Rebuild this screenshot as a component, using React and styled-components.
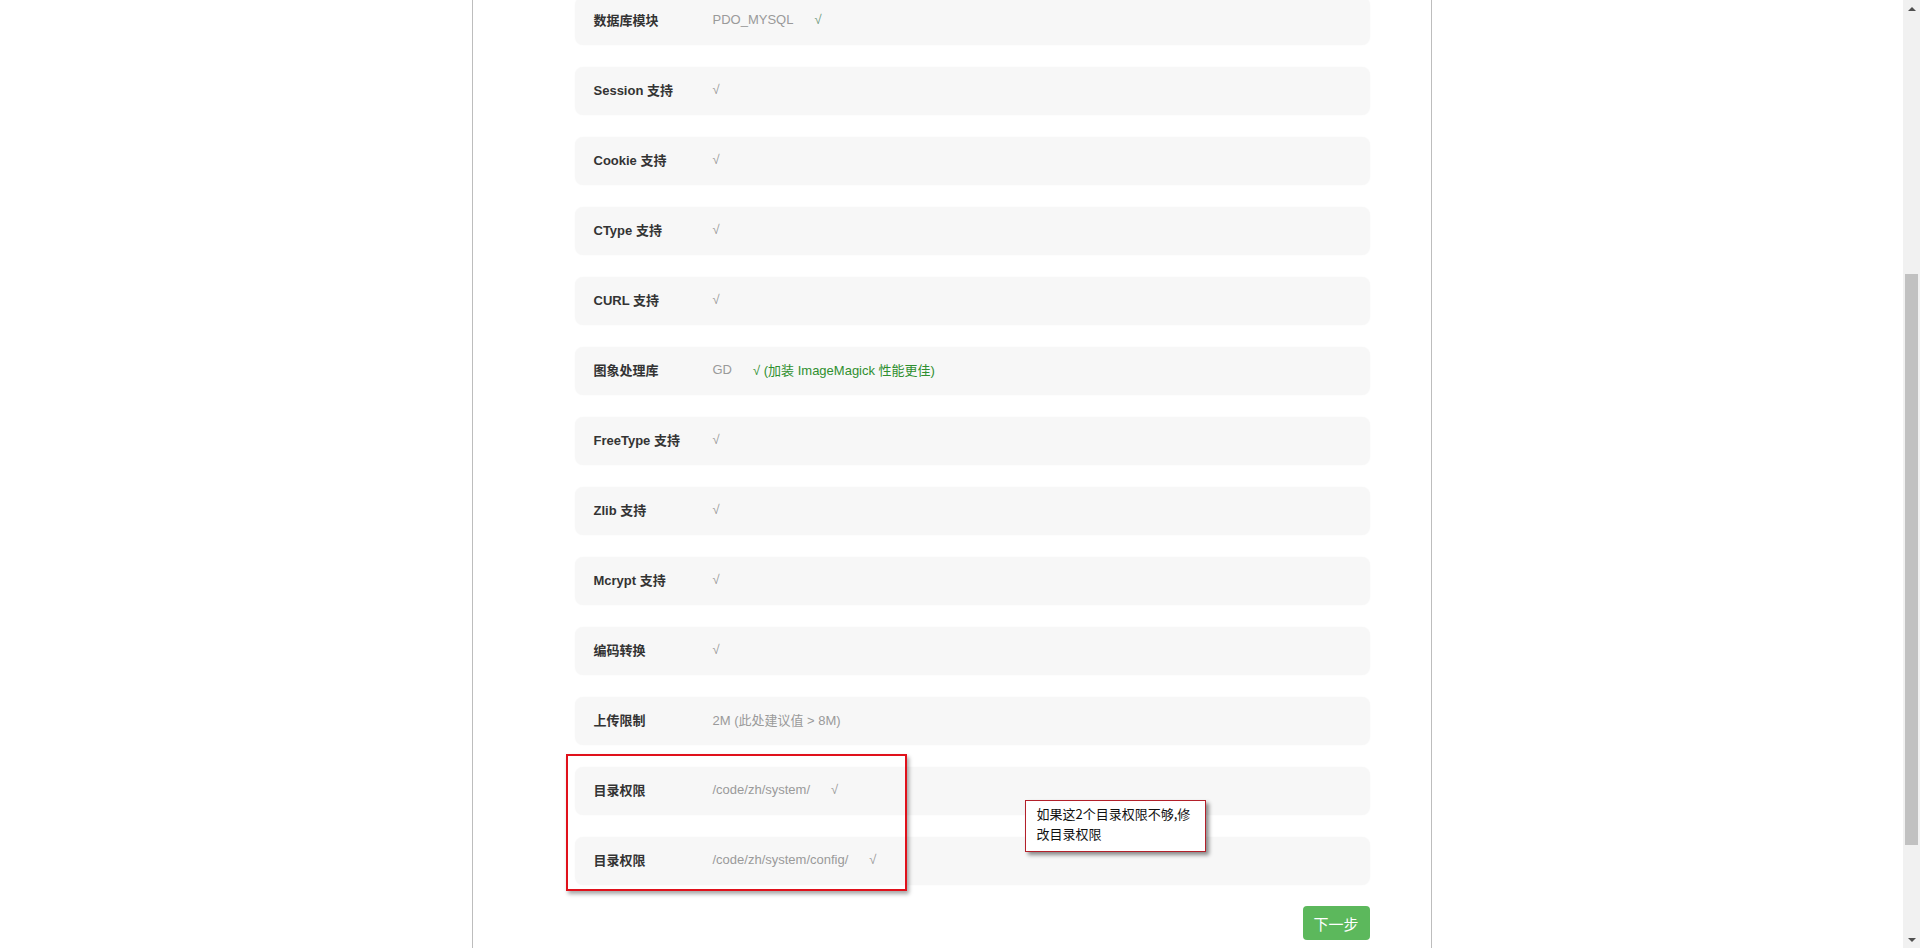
import React, { Fragment } from 'react';
import styled, { createGlobalStyle } from 'styled-components';

// ─────────────────────────────────────────────────────────────────────────────
// global
// ─────────────────────────────────────────────────────────────────────────────

const GlobalStyle = createGlobalStyle`
  html, body {
    margin: 0;
    padding: 0;
    background: #fff;
    overflow: hidden;
  }
  body {
    font-family: "Liberation Sans", Arial, "Noto Sans CJK SC", sans-serif;
    font-size: 13px;
    color: #333;
  }
`;

// ─────────────────────────────────────────────────────────────────────────────
// page + scrollbar
// ─────────────────────────────────────────────────────────────────────────────

const Page = styled.div`
  display: flex;
  height: 100vh;
`;

const Main = styled.main`
  flex: 1;
  overflow: hidden;
`;

const Scrollbar = styled.div`
  width: 17px;
  flex: none;
  display: flex;
  flex-direction: column;
  background: #f1f1f1;
`;

const Arrow = styled.div`
  height: 17px;
  display: flex;
  align-items: center;
  justify-content: center;
  &::before {
    content: '';
    border-left: 4px solid transparent;
    border-right: 4px solid transparent;
    ${(p) =>
      p.down ? 'border-top: 4px solid #505050;' : 'border-bottom: 4px solid #505050;'}
  }
`;

const Track = styled.div`
  flex: 1;
  padding: 257px 2px 0;
`;

const Thumb = styled.div`
  height: 571px;
  background: #c1c1c1;
`;

// ─────────────────────────────────────────────────────────────────────────────
// panel
// ─────────────────────────────────────────────────────────────────────────────

const Panel = styled.div`
  box-sizing: border-box;
  width: 960px;
  min-height: 100vh;
  margin: 0 auto;
  border-left: 1px solid #bdbdbd;
  border-right: 1px solid #bdbdbd;
  padding: 0 61px 0 102px;
`;

const List = styled.div`
  display: flex;
  flex-direction: column;
  gap: 22px;
  margin-top: -3px;
`;

const Group = styled.div`
  position: relative;
  display: flex;
  flex-direction: column;
  gap: 22px;
`;

const Row = styled.div`
  box-sizing: border-box;
  display: flex;
  align-items: center;
  height: 48px;
  padding: 0 0 3px 19px;
  background: #f7f7f7;
  border-radius: 8px;
  box-shadow: 0 0 2px rgba(0, 0, 0, 0.03);
`;

const Label = styled.span`
  width: 119px;
  flex: none;
  font-weight: bold;
  color: #333;
`;

const Value = styled.span`
  color: #9a9a9a;
`;

const Check = styled.span`
  margin-left: ${(p) => p.gap ?? 0}px;
  color: ${(p) => (p.green ? '#2f8f2f' : p.tint ? '#6f9a80' : '#9a9a9a')};
`;

// ─────────────────────────────────────────────────────────────────────────────
// annotations
// ─────────────────────────────────────────────────────────────────────────────

const Highlight = styled.div`
  position: absolute;
  left: -9px;
  top: -13px;
  width: 341px;
  height: 137px;
  box-sizing: border-box;
  border: 2px solid #e0111b;
  box-shadow: 2px 3px 4px rgba(0, 0, 0, 0.35);
  pointer-events: none;
`;

const Note = styled.div`
  position: absolute;
  left: 450px;
  top: 33px;
  width: 181px;
  height: 52px;
  box-sizing: border-box;
  padding: 3px 10px 0 11px;
  background: #fff;
  border: 1px solid #b3202a;
  box-shadow: 3px 3px 4px rgba(0, 0, 0, 0.45);
  font-family: "Noto Sans CJK SC", sans-serif;
  font-size: 13px;
  line-height: 20px;
  color: #111;
`;

// ─────────────────────────────────────────────────────────────────────────────
// footer
// ─────────────────────────────────────────────────────────────────────────────

const Actions = styled.div`
  display: flex;
  justify-content: flex-end;
  padding: 21px 0 40px;
`;

const Button = styled.button`
  width: 67px;
  height: 34px;
  border: 0;
  border-radius: 4px;
  background: #5cb85c;
  color: #fff;
  font-family: "Noto Sans CJK SC", sans-serif;
  font-size: 15px;
  cursor: pointer;
`;

// ─────────────────────────────────────────────────────────────────────────────
// data
// ─────────────────────────────────────────────────────────────────────────────

const rows = [
  { label: '数据库模块', value: 'PDO_MYSQL', check: { gap: 21, tint: true } },
  { label: 'Session 支持', check: {} },
  { label: 'Cookie 支持', check: {} },
  { label: 'CType 支持', check: {} },
  { label: 'CURL 支持', check: {} },
  { label: '图象处理库', value: 'GD', check: { gap: 21, green: true, text: '√ (加装 ImageMagick 性能更佳)' } },
  { label: 'FreeType 支持', check: {} },
  { label: 'Zlib 支持', check: {} },
  { label: 'Mcrypt 支持', check: {} },
  { label: '编码转换', check: {} },
  { label: '上传限制', value: '2M (此处建议值 > 8M)' },
];

const dirs = [
  { label: '目录权限', value: '/code/zh/system/' },
  { label: '目录权限', value: '/code/zh/system/config/' },
];

function CheckRow({ label, value, check }) {
  return (
    <Row>
      <Label>{label}</Label>
      {value && <Value>{value}</Value>}
      {check && (
        <Check gap={check.gap} green={check.green} tint={check.tint}>
          {check.text || '√'}
        </Check>
      )}
    </Row>
  );
}

export default function App() {
  return (
    <Fragment>
      <GlobalStyle />
      <Page>
        <Main>
          <Panel>
            <List>
              {rows.map((r, i) => (
                <CheckRow key={i} {...r} />
              ))}
              <Group>
                {dirs.map((d, i) => (
                  <CheckRow key={i} {...d} check={{ gap: 21 }} />
                ))}
                <Highlight />
                <Note>如果这2个目录权限不够,修改目录权限</Note>
              </Group>
            </List>
            <Actions>
              <Button>下一步</Button>
            </Actions>
          </Panel>
        </Main>
        <Scrollbar>
          <Arrow />
          <Track>
            <Thumb />
          </Track>
          <Arrow down />
        </Scrollbar>
      </Page>
    </Fragment>
  );
}
